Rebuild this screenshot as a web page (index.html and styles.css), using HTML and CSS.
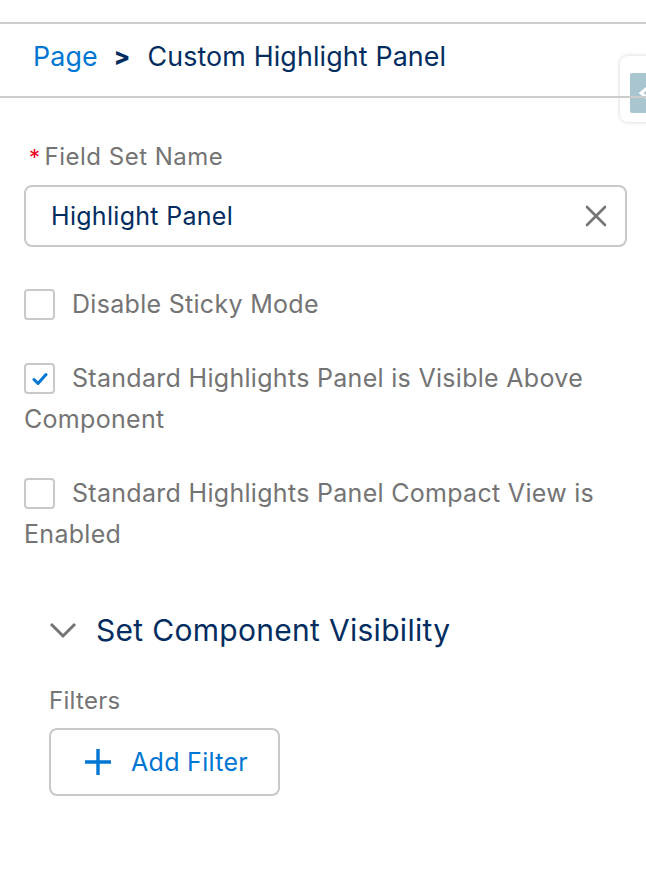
FILE: index.html
```html
<!DOCTYPE html>
<html>
<head>
<meta charset="utf-8">
<link rel="stylesheet" href="styles.css">
</head>
<body>
<div class="page">
  <header class="crumbs">
    <a class="crumb-link">Page</a>
    <span class="crumb-sep">&gt;</span>
    <span class="crumb-current">Custom Highlight Panel</span>
  </header>
  <div class="side-tab"><div class="side-tab-inner"><svg width="16" height="24" viewBox="0 0 16 24"><path d="M14 4 L4 12 L14 20" fill="none" stroke="#fff" stroke-width="3"/></svg></div></div>

  <main class="panel">
    <div class="field">
      <label class="field-label"><abbr class="req">*</abbr>Field Set Name</label>
      <div class="input">
        <span class="input-value">Highlight Panel</span>
        <svg class="clear" width="22" height="22" viewBox="0 0 22 22"><path d="M2 2 L20 20 M20 2 L2 20" stroke="#747474" stroke-width="2.6" stroke-linecap="round"/></svg>
      </div>
    </div>

    <div class="check">
      <span class="box"></span><span class="check-text">Disable Sticky Mode</span>
    </div>
    <div class="check">
      <span class="box"><svg width="16" height="14" viewBox="0 0 16 14"><path d="M2 7.5 L6 11.5 L14 2.5" fill="none" stroke="#0176d3" stroke-width="3" stroke-linecap="round" stroke-linejoin="round"/></svg></span><span class="check-text">Standard Highlights Panel is Visible Above Component</span>
    </div>
    <div class="check">
      <span class="box"></span><span class="check-text">Standard Highlights Panel Compact View is Enabled</span>
    </div>

    <section class="section">
      <div class="section-title">
        <svg class="chev" width="28" height="18" viewBox="0 0 28 18"><path d="M2 3 L14 15 L26 3" fill="none" stroke="#747474" stroke-width="3"/></svg>
        <span>Set Component Visibility</span>
      </div>
      <div class="filters-label">Filters</div>
      <button class="btn">
        <svg width="28" height="28" viewBox="0 0 28 28"><path d="M14 1 V27 M1 14 H27" stroke="#0176d3" stroke-width="3.4"/></svg>
        <span>Add Filter</span>
      </button>
    </section>
  </main>
</div>
</body>
</html>
```
FILE: styles.css
```css
* { box-sizing: border-box; }
html { margin: 0; padding: 0; background: #fff; }
body {
  margin: 0;
  padding: 0;
  font-family: Inter, "Noto Sans", sans-serif;
  width: 646px;
  height: 870px;
  overflow: hidden;
}
.page { position: relative; padding-top: 22px; }
.crumbs {
  height: 76px;
  border-top: 2px solid #cccccc;
  border-bottom: 2px solid #cccccc;
  display: flex;
  align-items: center;
  padding-left: 33px;
  padding-bottom: 8px;
  font-size: 26.8px;
  letter-spacing: 0.15px;
}
.crumb-link { color: #0176d3; }
.crumb-sep { color: #032d60; font-weight: 800; margin: 0 17px 0 16px; font-size: 24px; }
.crumb-current { color: #032d60; }
.side-tab {
  position: absolute;
  z-index: -1;
  left: 620px;
  top: 56px;
  width: 40px;
  height: 66px;
  background: #fff;
  border-radius: 8px;
  box-shadow: 0 0 4px rgba(0,0,0,0.18);
  padding: 17px 0 0 10px;
}
.side-tab-inner {
  width: 30px;
  height: 40px;
  background: #a9c5d0;
  border-radius: 2px;
  display: flex;
  align-items: center;
  padding-left: 7px;
}
.panel { padding: 0 19px 0 24px; }
.field { padding-top: 44px; }
.field-label {
  display: block;
  font-size: 24px;
  color: #747474;
  letter-spacing: 0.5px;
  line-height: 30px;
  padding-left: 5px;
}
.req { color: #ea001e; text-decoration: none; margin-right: 4px; font-size: 22px; }
.input {
  margin-top: 13px;
  height: 62px;
  border: 2px solid #c9c9c9;
  border-radius: 8px;
  display: flex;
  align-items: center;
  justify-content: space-between;
  padding: 0 18px 0 25px;
}
.input-value { color: #032d60; font-size: 25px; letter-spacing: 0.3px; }
.check {
  display: block;
  margin-top: 37px;
  font-size: 25px;
  line-height: 41px;
  color: #747474;
  letter-spacing: 0.3px;
}
.check + .check { margin-top: 33px; }
.box {
  display: inline-flex;
  align-items: center;
  justify-content: center;
  width: 31px;
  height: 31px;
  border: 2px solid #c9c9c9;
  border-radius: 4px;
  vertical-align: top;
  margin-top: 5px;
  margin-right: 17px;
  background: #fff;
}
.section { padding: 0 0 0 25px; margin-top: 55px; }
.section-title {
  display: flex;
  align-items: center;
  gap: 19px;
  color: #032d60;
  font-size: 30px;
  letter-spacing: 0.3px;
  height: 40px;
}
.filters-label {
  margin-top: 36px;
  color: #747474;
  font-size: 24px;
  letter-spacing: 0.3px;
  line-height: 30px;
}
.btn {
  margin-top: 12px;
  width: 231px;
  height: 68px;
  border: 2px solid #c9c9c9;
  border-radius: 8px;
  background: #fff;
  display: flex;
  align-items: center;
  padding: 0 0 0 33px;
  gap: 19px;
  font-family: inherit;
  font-size: 25px;
  color: #0176d3;
  letter-spacing: 0.3px;
}
```
